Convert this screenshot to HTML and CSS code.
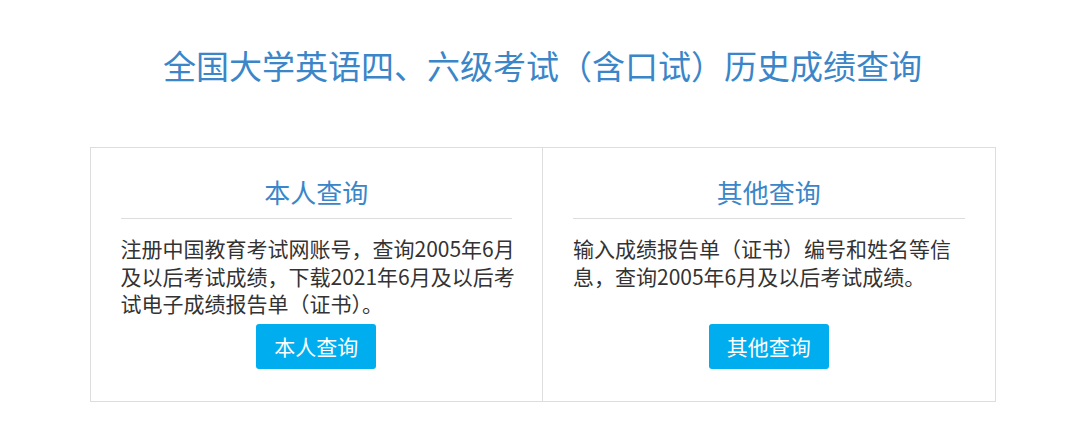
FILE: index.html
```html
<!DOCTYPE html>
<html lang="zh-CN">
<head>
  <meta charset="UTF-8" />
  <meta name="viewport" content="width=device-width, initial-scale=1" />
  <title>全国大学英语四、六级考试（含口试）历史成绩查询</title>
  <link rel="stylesheet" href="styles.css">
</head>
<body>
  <div class="page">
    <h1 class="title">全国大学英语四、六级考试（含口试）历史成绩查询</h1>

    <div class="query-box">
      <div class="query-col">
        <h2 class="col-title">本人查询</h2>
        <p class="col-text">注册中国教育考试网账号，查询2005年6月及以后考试成绩，下载2021年6月及以后考试电子成绩报告单（证书）。</p>
        <a class="btn" href="#">本人查询</a>
      </div>
      <div class="query-col">
        <h2 class="col-title">其他查询</h2>
        <p class="col-text">输入成绩报告单（证书）编号和姓名等信息，查询2005年6月及以后考试成绩。</p>
        <a class="btn" href="#">其他查询</a>
      </div>
    </div>
  </div>
</body>
</html>
```

FILE: styles.css
```css
html, body {
  margin: 0;
  padding: 0;
  background: #fff;
}

body {
  padding-right: 5px;
  font-family: "Noto Sans CJK SC", "Noto Sans", sans-serif;
  color: #333;
}

.page {
  width: 906px;
  margin: 0 auto;
}

.title {
  margin: 0;
  padding-top: 43px;
  height: 147px;
  box-sizing: border-box;
  text-align: center;
  font-size: 33px;
  font-weight: normal;
  line-height: 44px;
  color: #3b86c8;
}

.query-box {
  display: flex;
  border: 1px solid #ddd;
  height: 255px;
  box-sizing: border-box;
}

.query-col {
  flex: 1;
  display: flex;
  flex-direction: column;
  padding: 26px 30px 32px;
}

.query-col + .query-col {
  border-left: 1px solid #ddd;
}

.col-title {
  margin: 0;
  padding-bottom: 8px;
  border-bottom: 1px solid #ddd;
  text-align: center;
  font-size: 26px;
  font-weight: normal;
  line-height: 36px;
  color: #3b86c8;
}

.col-text {
  margin: 16px -7px 0 0;
  font-size: 21px;
  line-height: 27.5px;
  color: #333;
}

.btn {
  margin-top: auto;
  align-self: center;
  display: block;
  width: 120px;
  height: 45px;
  line-height: 45px;
  border-radius: 3px;
  background: #00aeef;
  color: #fff;
  text-align: center;
  font-size: 21px;
  text-decoration: none;
}
```
